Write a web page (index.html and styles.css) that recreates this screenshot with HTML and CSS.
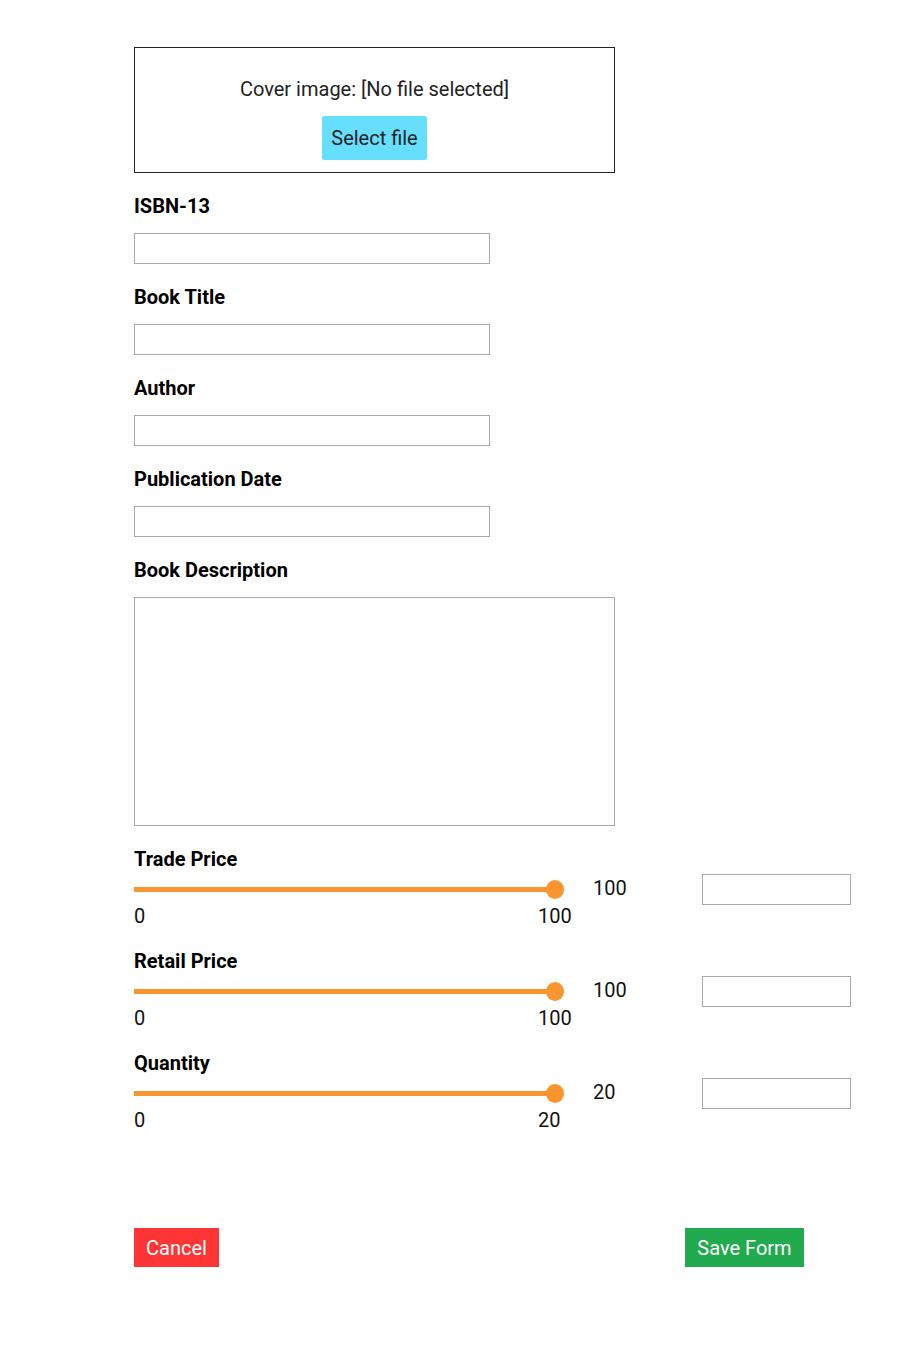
FILE: index.html
```html
<!DOCTYPE html>
<html lang="en">
<head>
<meta charset="utf-8">
<title>Book form</title>
<link rel="stylesheet" href="styles.css">
</head>
<body>
<form class="form">
  <div class="cover">
    <p class="cover-text">Cover image: [No file selected]</p>
    <button type="button" class="select-btn">Select file</button>
  </div>

  <div class="field">
    <label class="label">ISBN-13</label>
    <input class="input" type="text">
  </div>
  <div class="field">
    <label class="label">Book Title</label>
    <input class="input" type="text">
  </div>
  <div class="field">
    <label class="label">Author</label>
    <input class="input" type="text">
  </div>
  <div class="field">
    <label class="label">Publication Date</label>
    <input class="input" type="text">
  </div>
  <div class="field">
    <label class="label">Book Description</label>
    <textarea class="textarea"></textarea>
  </div>

  <div class="slider-group">
    <label class="label">Trade Price</label>
    <div class="slider-row">
      <div class="slider"><div class="track"></div><div class="thumb"></div></div>
      <span class="value">100</span>
      <input class="small-input" type="text">
    </div>
    <div class="range-labels"><span class="min">0</span><span class="max">100</span></div>
  </div>

  <div class="slider-group">
    <label class="label">Retail Price</label>
    <div class="slider-row">
      <div class="slider"><div class="track"></div><div class="thumb"></div></div>
      <span class="value">100</span>
      <input class="small-input" type="text">
    </div>
    <div class="range-labels"><span class="min">0</span><span class="max">100</span></div>
  </div>

  <div class="slider-group">
    <label class="label">Quantity</label>
    <div class="slider-row">
      <div class="slider"><div class="track"></div><div class="thumb"></div></div>
      <span class="value">20</span>
      <input class="small-input" type="text">
    </div>
    <div class="range-labels"><span class="min">0</span><span class="max">20</span></div>
  </div>

  <div class="actions">
    <button type="button" class="btn btn-cancel">Cancel</button>
    <button type="button" class="btn btn-save">Save Form</button>
  </div>
</form>
</body>
</html>
```

FILE: styles.css
```css
* { box-sizing: border-box; }
html, body { margin: 0; padding: 0; background: #fff; }
body {
  font-family: Roboto, "Liberation Sans", Arial, sans-serif;
  color: #000;
}
.form {
  padding: 47px 0 0 134px;
  display: flex;
  flex-direction: column;
  align-items: flex-start;
}
.cover {
  width: 481px;
  height: 126px;
  border: 1px solid #222;
  display: flex;
  flex-direction: column;
  align-items: center;
  padding-top: 29px;
}
.cover-text {
  margin: 0;
  font-size: 20px;
  line-height: 24px;
  color: #222;
}
.select-btn {
  margin-top: 15px;
  height: 44px;
  padding: 0 9px;
  border: none;
  border-radius: 2px;
  background: #66dfff;
  color: #222;
  font-family: inherit;
  font-size: 20px;
}
.field {
  margin-top: 21px;
  display: flex;
  flex-direction: column;
  align-items: flex-start;
}
.label {
  font-size: 20px;
  line-height: 24px;
  font-weight: 700;
  color: #000;
}
.input {
  margin-top: 15px;
  width: 356px;
  height: 31px;
  border: 1px solid #aaa;
  padding: 0;
}
.textarea {
  margin-top: 15px;
  width: 481px;
  height: 229px;
  border: 1px solid #aaa;
  padding: 0;
  resize: none;
  display: block;
}
.slider-group {
  margin-top: 21px;
  display: flex;
  flex-direction: column;
  align-items: flex-start;
}
.slider-row {
  margin-top: 3px;
  height: 30px;
  display: flex;
  align-items: flex-start;
}
.slider {
  position: relative;
  margin-top: 6px;
  width: 430px;
  height: 19px;
  display: flex;
  align-items: center;
}
.track {
  width: 421px;
  height: 5px;
  background: #f9952f;
}
.thumb {
  position: absolute;
  right: 0;
  top: 0;
  width: 18px;
  height: 19px;
  border-radius: 50%;
  background: #f9952f;
}
.value {
  margin-top: 2px;
  margin-left: 29px;
  width: 109px;
  font-size: 20px;
  line-height: 24px;
  color: #111;
}
.small-input {
  width: 149px;
  height: 31px;
  border: 1px solid #aaa;
  padding: 0;
}
.range-labels {
  display: flex;
  font-size: 20px;
  line-height: 24px;
  color: #111;
}
.range-labels .min { width: 404px; }
.actions {
  margin-top: 96px;
  width: 670px;
  display: flex;
  justify-content: space-between;
}
.btn {
  height: 39px;
  border: none;
  border-radius: 0;
  padding: 0 12px;
  font-family: inherit;
  font-size: 20px;
  color: #fff;
}
.btn-cancel { background: #fd3535; }
.btn-save { background: #22aa4f; width: 119px; }
```
